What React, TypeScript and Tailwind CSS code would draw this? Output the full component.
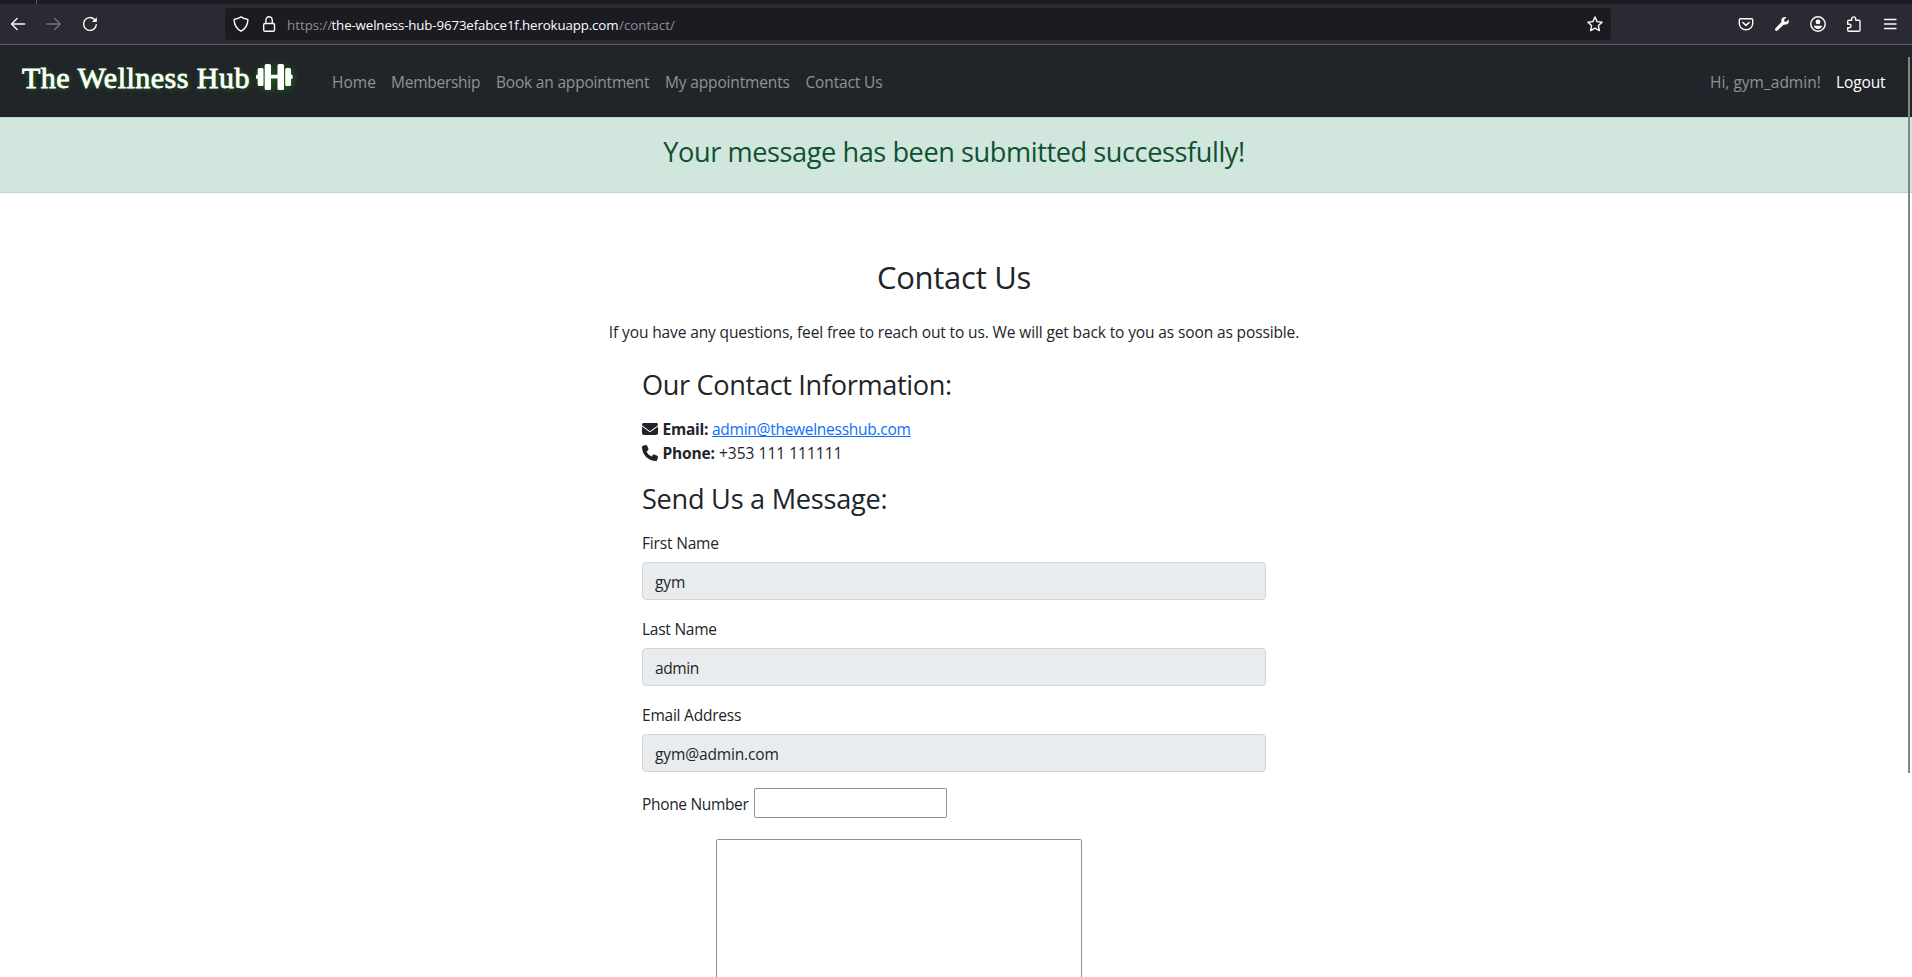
import React from 'react';

const stroke = {
  fill: 'none',
  stroke: 'currentColor',
  strokeWidth: 1.4,
  strokeLinecap: 'round' as const,
  strokeLinejoin: 'round' as const,
};

function Icon({ children, className = '' }: { children: React.ReactNode; className?: string }) {
  return (
    <svg viewBox="0 0 16 16" className={`size-4 shrink-0 ${className}`} {...stroke}>
      {children}
    </svg>
  );
}

function BrowserBar() {
  return (
    <div className="h-[45px] bg-[#2b2a33] text-[#fbfbfe]">
      <div className="flex h-1 bg-[#1c1b22]">
        <div className="ml-9 w-px bg-[#5b5a64]" />
      </div>
      <div className="box-content flex h-10 items-center border-b border-[#5b5a66]">
        <Icon className="ml-[10px]">
          <path d="M14.6 8H1.6M7 2.6 1.6 8 7 13.4" />
        </Icon>
        <Icon className="ml-5 text-[#74737b]">
          <path d="M1 8h13.2M8.7 2.6 14.2 8l-5.5 5.4" />
        </Icon>
        <Icon className="ml-5">
          <path d="M14.3 8.6A6.4 6.4 0 1 1 12.4 3.4" />
          <path d="M14.8 1.2v4.9H9.9z" fill="currentColor" stroke="none" />
        </Icon>
        <div className="ml-[127px] flex h-8 w-[1386px] items-center rounded-[4px] bg-[#1c1b22]">
          <Icon className="ml-2">
            <path d="M8 .9c1.9 1.400 4.100 2 6.400 2.300.4 0 .5.3.5.7C14.700 8.800 12.500 12.800 8 15.200 3.500 12.800 1.300 8.800 1.100 3.900c0-.4.1-.7.5-.7C3.900 2.900 6.100 2.300 8 .9z" />
          </Icon>
          <Icon className="ml-3">
            <rect x="2.7" y="7.5" width="10.8" height="7.7" rx="1.3" />
            <path d="M4.900 7.500V4.300a3.200 3.600 0 0 1 6.400 0v3.200" />
          </Icon>
          <div className="mt-px ml-[10px] flex grow font-['Open_Sans',sans-serif] text-[13.3px] leading-5 whitespace-pre text-[#8f8e96]">
            <span className="w-[44.5px]">https://</span>
            <span className="w-[287.5px] tracking-[-0.13px] text-[#fbfbfe]">the-welness-hub-9673efabce1f.herokuapp.com</span>
            <span className="tracking-[0.04px]">/contact/</span>
          </div>
          <Icon className="mr-2">
            <path d="m8 1 2.100 4.600 5 .6-3.700 3.400 1 5L8 12.100l-4.400 2.500 1-5L.9 6.200l5-.6z" />
          </Icon>
        </div>
        <Icon className="ml-[127px]">
          <path d="M2.500 2.700h11c.8 0 1.200.4 1.200 1.200v3.500a6.700 6.400 0 0 1-13.400 0V3.900c0-.8.4-1.200 1.200-1.200z" />
          <path d="M4.900 6.500 8 9.400l3.100-2.900" strokeWidth="1.6" />
        </Icon>
        <Icon className="ml-5">
          <path
            d="M14.700 3.500l-2.400 2.300-1.900-.3-.3-1.800 2.300-2.400C10.300.4 7.700 1.600 7.300 4c-.1.700 0 1.300.2 1.900L1.300 12.400c-1.200 1.400.8 3.400 2.200 2.200l6.500-6.200c.6.200 1.200.3 1.900.2 2.400-.4 3.600-2.900 2.800-5.100z"
            fill="currentColor"
            stroke="none"
          />
        </Icon>
        <Icon className="ml-5">
          <circle cx="8" cy="8" r="7.2" strokeWidth="1.5" />
          <circle cx="8" cy="5.9" r="2.4" fill="currentColor" stroke="none" />
          <path d="M3.700 9.800h8.600c-.3 1.900-2.200 3.100-4.300 3.100s-4-1.200-4.300-3.100z" fill="currentColor" stroke="none" />
        </Icon>
        <Icon className="ml-5">
          <path d="M1.700 8.200V5.400c0-.8.4-1.200 1.200-1.200h2.800V2.900a2 2 0 0 1 4 0v1.300h3.100c.8 0 1.200.4 1.200 1.200v8.700c0 .8-.4 1.200-1.200 1.200H2.900c-.8 0-1.200-.4-1.200-1.200v-2.400h1.600a1.750 1.750 0 0 0 0-3.500z" />
        </Icon>
        <Icon className="ml-5">
          <path d="M2.500 3.500h11.500M2.500 8h11.500M2.500 12.500h11.500" />
        </Icon>
      </div>
    </div>
  );
}

function Dumbbell() {
  return (
    <svg
      viewBox="0 0 37 27"
      className="ml-[6px] h-[27px] w-[37px] overflow-visible fill-white [filter:drop-shadow(1px_1px_3px_#1c6b12)]"
    >
      <rect x="8.7" y="0" width="6.3" height="26" rx="1.5" />
      <rect x="21.5" y="0" width="6.5" height="26" rx="1.5" />
      <rect x="14" y="10.8" width="9" height="3.7" />
      <rect x="1.7" y="4" width="5.8" height="18" rx="1.5" />
      <rect x="29.2" y="4" width="5.8" height="18" rx="1.5" />
      <rect x="0" y="10.5" width="3" height="4.5" rx="1.5" />
      <rect x="33.7" y="10.5" width="3" height="4.5" rx="1.5" />
    </svg>
  );
}

function Navbar() {
  return (
    <nav className="flex h-[72px] items-start bg-[#212529] text-[15.52px] leading-6 whitespace-nowrap text-[#909294]">
      <a className="mt-[19px] ml-[22px] flex w-[310px] text-white">
        <span className="-mt-px w-[228px] font-['Liberation_Serif',serif] text-[30px] leading-[30px] tracking-[0.47px] [text-shadow:1px_1px_5px_#1c7a10] [-webkit-text-stroke:0.8px_white]">
          The Wellness Hub
        </span>
        <Dumbbell />
      </a>
      <div className="mt-[25px] flex">
        <a className="w-[59px]">Home</a>
        <a className="w-[105px] tracking-[-0.27px]">Membership</a>
        <a className="w-[169px] tracking-[-0.2px]">Book an appointment</a>
        <a className="w-[140.5px] tracking-[-0.16px]">My appointments</a>
        <a className="tracking-[-0.15px]">Contact Us</a>
      </div>
      <div className="mt-[25px] mr-[25px] ml-auto flex">
        <span className="w-[126px]">Hi, gym_admin!</span>
        <a className="w-[51px] tracking-[-0.14px] text-white">Logout</a>
      </div>
    </nav>
  );
}

function Field({ label, value, labelClass, valueClass }: { label: string; value: string; labelClass: string; valueClass: string }) {
  return (
    <div className="mb-[17px]">
      <label className={`block ${labelClass}`}>{label}</label>
      <div className="mt-[7px] h-[38px] rounded-[4px] border border-[#ced4da] bg-[#e9ecef] px-3 py-[7px]">
        <span className={valueClass}>{value}</span>
      </div>
    </div>
  );
}

export default function App() {
  return (
    <div className="relative h-[977px] overflow-hidden bg-white font-['Open_Sans','Noto_Sans',sans-serif] text-[15.52px] leading-6 text-[#212529]">
      <BrowserBar />
      <Navbar />
      <div className="flex h-[76px] justify-center border-y border-[#badbcc] bg-[#d1e7dd] pt-[17px] pr-[4px] text-[#0f5132]">
        <h3 className="text-[27.16px] leading-[34px] tracking-[-0.43px]">Your message has been submitted successfully!</h3>
      </div>
      <main className="pt-[65px] pr-1">
        <h2 className="text-center text-[31.04px] leading-[38px] tracking-[-0.28px]">Contact Us</h2>
        <p className="mt-6 text-center tracking-[-0.13px]">
          If you have any questions, feel free to reach out to us. We will get back to you as soon as possible.
        </p>
        <div className="mx-auto w-[624px]">
          <h3 className="mt-6 text-[27.16px] leading-[34px] tracking-[-0.35px]">Our Contact Information:</h3>
          <div className="mt-[15px] flex">
            <svg viewBox="0 0 512 512" className="mt-1 size-4 fill-current">
              <path d="M48 64C21.500 64 0 85.500 0 112c0 15.100 7.100 29.300 19.200 38.400L236.800 313.600c11.400 8.500 27 8.500 38.400 0L492.800 150.400c12.100-9.100 19.200-23.300 19.200-38.400c0-26.500-21.500-48-48-48H48zM0 176V384c0 35.300 28.700 64 64 64H448c35.300 0 64-28.700 64-64V176L294.400 339.200c-22.800 17.100-54 17.100-76.800 0L0 176z" />
            </svg>
            <b className="ml-[4.5px] w-[49.5px] font-bold tracking-[-0.25px]">Email:</b>
            <a className="tracking-[-0.28px] text-[#0d6efd] underline">admin@thewelnesshub.com</a>
          </div>
          <div className="flex">
            <svg viewBox="0 0 512 512" className="mt-1 size-4 fill-current">
              <path d="M164.900 24.600c-7.700-18.600-28-28.500-47.400-23.200l-88 24C12.100 30.200 0 46 0 64C0 311.400 200.600 512 448 512c18 0 33.800-12.100 38.600-29.500l24-88c5.300-19.400-4.600-39.700-23.200-47.400l-96-40c-16.300-6.800-35.200-2.100-46.300 11.600L304.700 368C234.300 334.700 177.300 277.700 144 207.300L193.300 167c13.700-11.200 18.400-30 11.600-46.300l-40-96z" />
            </svg>
            <b className="ml-[4.5px] w-[56.5px] font-bold tracking-[-0.18px]">Phone:</b>
            <span>+353 111 111111</span>
          </div>
          <h3 className="mt-[17px] mb-[15px] text-[27.16px] leading-[34px] tracking-[-0.27px]">Send Us a Message:</h3>
          <Field label="First Name" value="gym" labelClass="tracking-[-0.18px]" valueClass="tracking-[-0.1px]" />
          <Field label="Last Name" value="admin" labelClass="tracking-[-0.26px]" valueClass="tracking-[-0.42px]" />
          <Field label="Email Address" value="gym@admin.com" labelClass="tracking-[-0.23px]" valueClass="tracking-[-0.14px]" />
          <div className="-mt-px flex">
            <label className="mt-1 w-[112px] tracking-[-0.34px]">Phone Number</label>
            <div className="h-[30px] w-[193px] rounded-[2px] border border-[#8f8f9d] bg-white" />
          </div>
          <div className="mt-[21px] ml-[74px] h-[200px] w-[366px] rounded-[2px] border border-[#8f8f9d] bg-white" />
        </div>
      </main>
      <div className="absolute top-[57px] left-[1908px] h-[716px] w-[2px] bg-[#858585]" />
    </div>
  );
}
